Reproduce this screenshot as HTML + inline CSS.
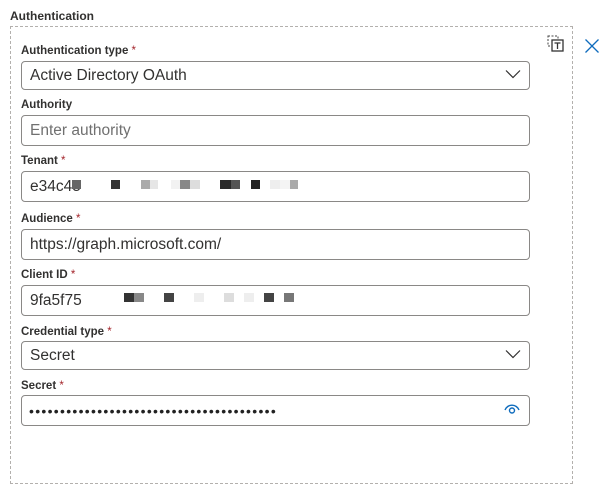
<!DOCTYPE html>
<html><head><meta charset="utf-8"><style>
*{box-sizing:border-box;margin:0;padding:0}
body{width:611px;height:494px;background:#fff;position:relative;overflow:hidden;font-family:"Liberation Sans",sans-serif;color:#323130}
.a{position:absolute}
.lbl{position:absolute;left:21px;font-size:11.5px;font-weight:bold;color:#323130}
.lbl i{font-style:normal;color:#a4262c;font-weight:normal}
.in{position:absolute;left:21px;width:509px;border:1px solid #8a8886;border-radius:4px;font-size:15.5px;padding-left:8px;display:flex;align-items:center}
.b{position:absolute;height:9px}
</style></head><body>
<div class="a" style="left:10px;top:9px;font-size:12px;font-weight:bold">Authentication</div>
<div class="a" style="left:10px;top:26px;width:563px;height:458px;border:1px dashed #b3b0ad"></div>
<svg class="a" style="left:546px;top:34px" width="20" height="18" viewBox="0 0 20 18"><rect x="2" y="2" width="10" height="10" fill="none" stroke="#444" stroke-dasharray="2 1.5"/><rect x="6" y="6" width="11" height="11" fill="#fff" stroke="#333" stroke-width="1.3"/><path d="M8.5 9h6M11.5 9v6" stroke="#333" stroke-width="1.3"/></svg>
<svg class="a" style="left:584px;top:38px" width="16" height="16" viewBox="0 0 16 16"><path d="M1.5 1.5l13 13M14.5 1.5l-13 13" stroke="#0f6cbd" stroke-width="1.3"/></svg>

<div class="lbl" style="top:45px">Authentication type <i>*</i></div>
<div class="in" style="top:61px;height:29px">Active Directory OAuth</div>
<svg class="a" style="left:505px;top:69px" width="16" height="10"><path d="M1 1.5l7 7 7-7" fill="none" stroke="#323130" stroke-width="1.2"/></svg>

<div class="lbl" style="top:99px">Authority</div>
<div class="in" style="top:115px;height:31px;color:#707070">Enter authority</div>

<div class="lbl" style="top:155px">Tenant <i>*</i></div>
<div class="in" style="top:171px;height:31px">e34c45</div>
<div class="b" style="left:72px;top:180px;width:9px;background:#666"></div>
<div class="b" style="left:111px;top:180px;width:9px;background:#333"></div>
<div class="b" style="left:141px;top:180px;width:9px;background:#aaa"></div>
<div class="b" style="left:150px;top:180px;width:8px;background:#e6e6e6"></div>
<div class="b" style="left:171px;top:180px;width:9px;background:#f2f2f2"></div>
<div class="b" style="left:180px;top:180px;width:10px;background:#888"></div>
<div class="b" style="left:190px;top:180px;width:10px;background:#ddd"></div>
<div class="b" style="left:220px;top:180px;width:11px;background:#2a2a2a"></div>
<div class="b" style="left:231px;top:180px;width:9px;background:#555"></div>
<div class="b" style="left:251px;top:180px;width:9px;background:#222"></div>
<div class="b" style="left:270px;top:180px;width:10px;background:#eee"></div>
<div class="b" style="left:280px;top:180px;width:10px;background:#f4f4f4"></div>
<div class="b" style="left:290px;top:180px;width:8px;background:#aaa"></div>

<div class="lbl" style="top:213px">Audience <i>*</i></div>
<div class="in" style="top:229px;height:31px">https://graph.microsoft.com/</div>

<div class="lbl" style="top:269px">Client ID <i>*</i></div>
<div class="in" style="top:285px;height:31px">9fa5f75</div>
<div class="b" style="left:124px;top:293px;width:10px;background:#333"></div>
<div class="b" style="left:134px;top:293px;width:10px;background:#888"></div>
<div class="b" style="left:164px;top:293px;width:10px;background:#444"></div>
<div class="b" style="left:194px;top:293px;width:10px;background:#eee"></div>
<div class="b" style="left:224px;top:293px;width:10px;background:#ddd"></div>
<div class="b" style="left:244px;top:293px;width:10px;background:#eee"></div>
<div class="b" style="left:264px;top:293px;width:10px;background:#444"></div>
<div class="b" style="left:284px;top:293px;width:10px;background:#777"></div>

<div class="lbl" style="top:326px">Credential type <i>*</i></div>
<div class="in" style="top:341px;height:29px">Secret</div>
<svg class="a" style="left:505px;top:349px" width="16" height="10"><path d="M1 1.5l7 7 7-7" fill="none" stroke="#323130" stroke-width="1.2"/></svg>

<div class="lbl" style="top:380px">Secret <i>*</i></div>
<div class="in" style="top:395px;height:31px;font-size:14px;letter-spacing:1.3px;color:#222;padding-left:7px">••••••••••••••••••••••••••••••••••••••••</div>
<svg class="a" style="left:503px;top:403px" width="18" height="12" viewBox="0 0 18 12"><path d="M2 7a7.5 7.5 0 0 1 14 0" fill="none" stroke="#0f6cbd" stroke-width="1.4"/><circle cx="9" cy="7.5" r="2.5" fill="none" stroke="#0f6cbd" stroke-width="1.4"/></svg>
</body></html>
